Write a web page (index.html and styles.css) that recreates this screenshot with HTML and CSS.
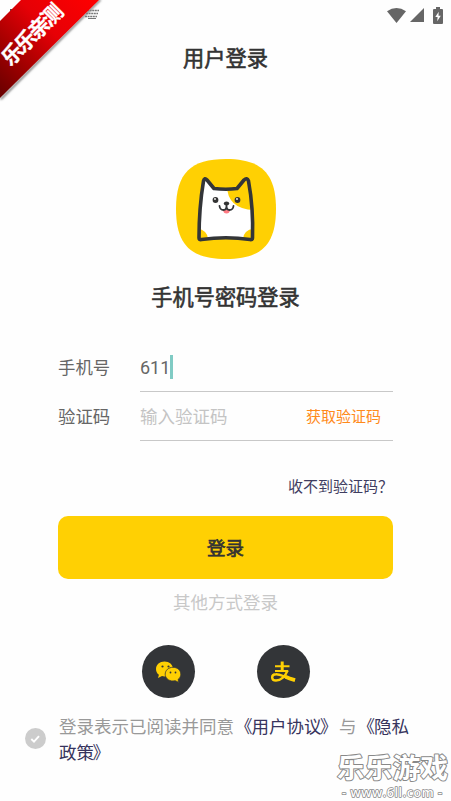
FILE: index.html
```html
<!DOCTYPE html>
<html lang="zh-CN">
<head>
<meta charset="utf-8">
<title>用户登录</title>
<link rel="stylesheet" href="styles.css">
</head>
<body>
<div class="screen">
  <header class="status">
    <svg class="wifi" width="19" height="15" viewBox="0 0 19 15"><path d="M0 3.2Q9.5-3 19 3.2L9.5 15Z"/></svg>
    <svg class="signal" width="14" height="14" viewBox="0 0 14 14"><path d="M14 0v14H0Z"/></svg>
    <svg class="battery" width="10" height="17" viewBox="0 0 10 17"><path d="M3 0h4v2h2q1 0 1 1v13q0 1-1 1H1q-1 0-1-1V3q0-1 1-1h2Z"/><path class="bolt" d="M5.7 4.8 2.3 10h2.3l-.4 4.2L7.8 8.700H5.500Z"/></svg>
  </header>
  <h1 class="title">用户登录</h1>
  <svg class="logo" width="100" height="100" viewBox="0 0 100 100">
    <path fill="#ffd003" d="M50 0C85 0 100 14 100 50S85 100 50 100 0 86 0 50 15 0 50 0Z"/>
    <clipPath id="body"><path d="M22 80Q22 49 26.500 22Q28 17 31 20L38 29Q50 31 61 29L68 20Q72 17 73.500 22Q78 49 77 80Q77 82 74 81Q50 77 25 81Q22 82 22 80Z"/></clipPath>
    <g clip-path="url(#body)"><path fill="#fff" d="M20 15h60v70H20Z"/><path fill="#ffd003" d="M51 26Q51 50 78 51V15H51Z"/><circle cx="22" cy="80" r="10" fill="#ffd003"/><circle cx="77" cy="80" r="10" fill="#ffd003"/></g>
    <path class="ink" stroke-width="3.600" d="M23 79Q23 49 27.500 22Q28.500 18 31 21L38 29.500Q50 31 61 29.500L68 21Q71 18 72.500 22Q77.500 49 76.500 79Q76.500 81 74 80.500Q50 77 25.500 80.500Q23 81 23 79Z"/>
    <path fill="#ff7b84" d="M47 51h7q-.5 3.500-3.500 3.500T47 51Z"/>
    <path class="ink" stroke-width="1.800" d="M43.500 47Q44 51 47.500 51Q50.500 51 50.500 47Q50.500 51 53.500 51Q57 51 57.500 47M50.500 45v2"/>
    <ellipse cx="50.500" cy="44.500" rx="2.700" ry="2" fill="#333"/>
    <circle cx="39.500" cy="41" r="2.900" fill="#333"/><circle cx="61.500" cy="41" r="2.900" fill="#333"/>
    <circle cx="39" cy="40" r=".9" fill="#fff"/><circle cx="61" cy="40" r=".9" fill="#fff"/>
  </svg>
  <h2 class="heading">手机号密码登录</h2>
  <main class="form">
    <div class="row"><span class="label">手机号</span><div class="field"><span class="phone">611</span><i class="caret"></i></div></div>
    <div class="row"><span class="label">验证码</span><div class="field"><span class="hint">输入验证码</span><a class="send">获取验证码</a></div></div>
    <a class="help">收不到验证码？</a>
    <button class="login">登录</button>
  </main>
  <p class="other">其他方式登录</p>
  <div class="socials">
    <span class="social"><svg width="53" height="53" viewBox="0 0 53 53">
      <path fill="#ffd003" d="M22.500 16.500c4.700 0 8.500 3.100 8.500 7.500s-3.800 7.500-8.500 7.500l-2.500-.4-4 2 .9-3.300C15 28.500 14 26.500 14 24c0-4.400 3.800-7.500 8.500-7.500Z"/>
      <path fill="#ffd003" stroke="#333538" stroke-width=".8" d="M31 22.300c4.400 0 7.800 3 7.800 6.900 0 2.200-1 4-2.700 5.200l.7 3-3.600-1.700-2.200.3c-4.400 0-7.800-2.900-7.800-6.800s3.400-6.900 7.800-6.900Z"/>
      <g fill="#333538"><circle cx="20.500" cy="21.500" r="1.100"/><circle cx="26.500" cy="21.500" r="1.100"/><circle cx="28.500" cy="27.500" r=".9"/><circle cx="33.500" cy="27.500" r=".9"/></g>
    </svg></span>
    <span class="social"><svg width="53" height="53" viewBox="0 0 53 53">
      <g fill="none" stroke="#ffd003"><path stroke-width="2" d="M18 21.200h14.500M18 26h13.200"/><path stroke-width="3" d="M25.200 16.500v9"/><path stroke-width="2.400" d="M30.500 25.700C28.500 31 24 35.500 19 35.500c-5 0-5.300-6 0-6.200C23 29 27 32 38 35"/><path stroke-width="3.800" d="M28.500 31.800Q32 33.500 38 35.200"/></g>
    </svg></span>
  </div>
  <footer class="agree">
    <svg class="check" width="21" height="21" viewBox="0 0 21 21"><circle cx="10.500" cy="10.500" r="10.500" fill="#ccc"/><path d="m6.300 11 2.700 2.600 5-5.500" fill="none" stroke="#fff" stroke-width="1.900"/></svg>
    <p class="terms">登录表示已阅读并同意<a><span class="open">《</span>用户协议<span class="close">》</span></a>与<a><span class="open">《</span>隐私<br>政策<span class="close">》</span></a></p>
  </footer>
  <svg class="ribbon" width="104" height="104" viewBox="0 0 104 104">
    <defs><linearGradient id="red" x1="0" y1="1" x2="1" y2="0"><stop offset="0" stop-color="#600"/><stop offset=".28" stop-color="#a00000"/><stop offset=".6" stop-color="#e60006"/><stop offset="1" stop-color="#f00"/></linearGradient>
    <filter id="soft"><feGaussianBlur stdDeviation="1"/></filter></defs>
    <g fill="none" stroke="#777"><path d="M87 10.500h12M86 13.500h12M85 16.500h12" stroke-width="1.500" stroke-dasharray="2 .6"/><path d="M88 18.500h8"/></g>
    <path d="M10 9h7l-7 7Z" fill="#555"/>
    <path d="M0 99 99 0h2L2 99Z" fill="#777" stroke="#888" filter="url(#soft)"/>
    <path d="M0 21 21 0h78L0 98Z" fill="url(#red)"/>
    <text class="ribbon-text" x="0" y="0" textLength="77" transform="translate(10.500 67) rotate(-45)">乐乐亲测</text>
  </svg>
  <svg class="mark" width="116" height="50" viewBox="0 0 116 50">
    <text class="mark-name" x="2" y="26.500" textLength="111">乐乐游戏</text>
    <text class="mark-url" x="7" y="45.500" textLength="100">- www.6ll.com -</text>
  </svg>
</div>
</body>
</html>
```
FILE: styles.css
```css
* { box-sizing: border-box; }
body { margin: 0; background: #fff; font-family: "Noto Sans CJK SC", sans-serif; }
h1, h2, p { margin: 0; }
.screen { position: relative; width: 451px; height: 801px; overflow: hidden; display: flex; flex-direction: column; align-items: center; background: #fefefe; }
.status { align-self: stretch; height: 30px; padding-right: 8px; display: flex; justify-content: flex-end; align-items: center; fill: #666; }
.signal { margin-left: 4px; }
.battery { margin-left: 9px; }
.bolt { fill: #fff; }
.title, .heading { font-size: 21.200px; font-weight: 400; line-height: 32px; color: #333; -webkit-text-stroke: .6px #333; }
.title { margin-top: 11px; }
.logo { flex: none; margin-top: 86px; }
.ink { fill: none; stroke: #333538; stroke-linecap: round; stroke-linejoin: round; }
.heading { margin-top: 21px; }
.form { width: 335px; margin-top: 31px; display: flex; flex-direction: column; }
.row { height: 49px; display: flex; }
.label { width: 82px; line-height: 48px; font-size: 17.400px; color: #666; }
.field { flex: 1; display: flex; align-items: center; padding-bottom: 2px; border-bottom: 1px solid #c8c8c8; }
.phone { padding-top: 2px; font: 18px Roboto, sans-serif; color: #666; }
.caret { width: 3px; height: 24px; margin-top: 1px; background: #80cbc4; }
.hint { font-size: 17.500px; color: #c4c4c4; }
.send { margin-left: auto; margin-right: 12px; font-size: 15px; color: #ff8a1a; }
.help { margin-top: 34px; align-self: flex-end; line-height: 22px; font-size: 15px; color: #3f3d61; }
.login { height: 63px; margin-top: 19px; padding: 0 0 2px; border: 0; border-radius: 10px; background: #ffd003; font: 400 18.500px "Noto Sans CJK SC", sans-serif; color: #333; -webkit-text-stroke: .7px #333; }
.other { margin-top: 10px; line-height: 26px; font-size: 17.500px; color: #c8c8c8; }
.socials { margin-top: 30px; display: flex; gap: 62px; }
.social { width: 53px; height: 53px; border-radius: 50%; background: #333538; }
.social svg { display: block; }
.agree { align-self: stretch; margin-top: 15px; padding-left: 25px; display: flex; align-items: center; gap: 13px; }
.check { flex: none; margin-bottom: 2px; }
.terms { font-size: 17.500px; line-height: 26px; color: #999; white-space: nowrap; }
.terms a { color: #37345d; }
.open { margin: 0 -1px 0 1px; }
.close { margin: 0 1.500px 0 -1.500px; }
.ribbon { position: absolute; left: 0; top: 0; }
.ribbon-text { font-size: 21px; font-weight: 700; fill: #fff; stroke: #fff; stroke-width: .3px; }
.mark { position: absolute; right: 0; bottom: 0; }
.mark text { fill: #fff; stroke: #888; paint-order: stroke; stroke-linejoin: round; }
.mark-name { font-size: 27.500px; font-weight: 700; stroke-width: 2px; }
.mark-url { font: 600 12.500px "Open Sans", sans-serif; stroke-width: 1.500px; }
```
